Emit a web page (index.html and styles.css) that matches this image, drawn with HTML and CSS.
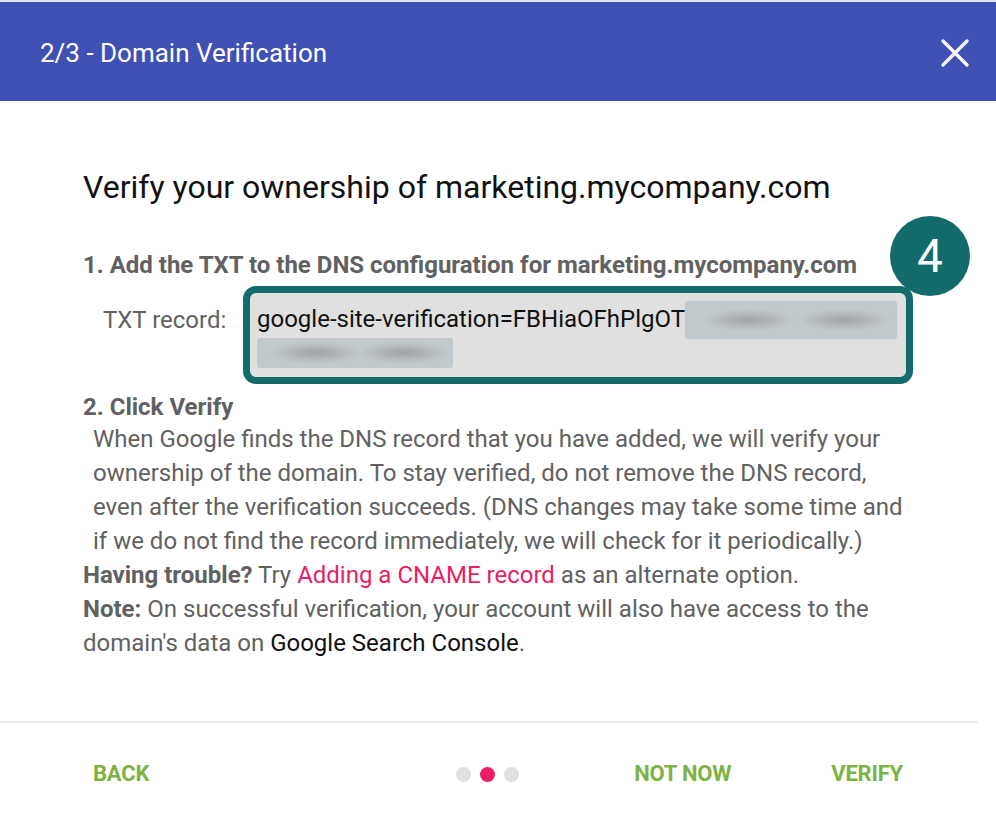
FILE: index.html
```html
<!DOCTYPE html>
<html>
<head>
<meta charset="utf-8">
<link rel="stylesheet" href="styles.css">
</head>
<body>
<div class="dialog">
  <header class="bar">
    <span class="bar-title">2/3 - Domain Verification</span>
    <svg class="close" width="28" height="28" viewBox="0 0 28 28"><path d="M2 2 L26 26 M26 2 L2 26" stroke="#fff" stroke-width="3.2" stroke-linecap="round"/></svg>
  </header>
  <main class="content">
    <h1 class="heading">Verify your ownership of marketing.mycompany.com</h1>
    <div class="step1">
      <div class="step-title">1. Add the TXT to the DNS configuration for marketing.mycompany.com</div>
      <div class="badge">4</div>
    </div>
    <div class="txt-row">
      <div class="txt-label">TXT record:</div>
      <div class="txt-box">
        <div class="txt-line">google-site-verification=FBHiaOFhPlgOT<span class="blur blur1"></span></div>
        <div class="txt-line"><span class="blur blur2"></span></div>
      </div>
    </div>
    <div class="step-title step2">2. Click Verify</div>
    <p class="para">When Google finds the DNS record that you have added, we will verify your ownership of the domain. To stay verified, do not remove the DNS record, even after the verification succeeds. (DNS changes may take some time and if we do not find the record immediately, we will check for it periodically.)</p>
    <div class="note">
      <div class="note-line"><b>Having trouble?</b> Try <span class="link">Adding a CNAME record</span> as an alternate option.</div>
      <div class="note-line"><b>Note:</b> On successful verification, your account will also have access to the</div>
      <div class="note-line">domain's data on <span class="dark">Google Search Console</span>.</div>
    </div>
  </main>
  <footer class="foot">
    <span class="btn btn-back">BACK</span>
    <span class="dots"><i class="dot"></i><i class="dot on"></i><i class="dot"></i></span>
    <span class="btn btn-notnow">NOT NOW</span>
    <span class="btn btn-verify">VERIFY</span>
  </footer>
</div>
</body>
</html>
```
FILE: styles.css
```css
* { box-sizing: border-box; }
html, body { margin: 0; padding: 0; background: #fff; }
body { font-family: Roboto, "Liberation Sans", Arial, sans-serif; color: #616161; }
.dialog { width: 996px; height: 814px; border-top: 2px solid #e6e6ef; }
.bar {
  height: 99px; background: #3f51b5; display: flex; align-items: center;
  justify-content: space-between; padding: 0 27px 0 40px;
}
.bar-title { color: #fff; font-size: 26px; line-height: 30px; margin-top: 2px; }
.close { display: block; margin-top: 2px; }
.content { padding: 69px 0 0 83px; position: relative; }
.heading { margin: 0; font-size: 32px; line-height: 35px; font-weight: 400; color: #111; }
.step1 { position: relative; margin-top: 43px; }
.step-title { font-weight: 700; font-size: 24px; line-height: 34px; color: #616161; }
.badge {
  position: absolute; left: 807px; top: -32px; width: 80px; height: 80px; border-radius: 50%;
  background: #136b6a; color: #fff; font-size: 46px; line-height: 80px; text-align: center;
}
.txt-row { display: flex; align-items: flex-start; margin-top: 4px; }
.txt-label { width: 160px; padding: 19px 0 0 20px; font-size: 24px; line-height: 30px; color: #616161; }
.txt-box {
  width: 670px; height: 98px; border: 7px solid #136b6a; border-radius: 13px; background: #e0e0e0;
  padding: 11px 0 0 7px; color: #111; font-size: 24px;
}
.txt-line { height: 31px; line-height: 31px; white-space: nowrap; display: flex; align-items: center; }
.blur {
  display: inline-block; border-radius: 3px;
  background:
    radial-gradient(ellipse 45px 11px at 30% 50%, rgba(150,150,150,0.75), rgba(150,150,150,0) 100%),
    radial-gradient(ellipse 45px 11px at 75% 50%, rgba(150,150,150,0.75), rgba(150,150,150,0) 100%),
    #c2c9cc;
}
.blur1 { width: 212px; height: 38px; margin-left: 0; }
.blur2 { width: 196px; height: 30px; margin-top: 4px; }
.step2 { margin-top: 6px; }
.para { margin: -2px 0 0 10px; width: 820px; font-size: 24px; line-height: 34px; }
.note { font-size: 24px; line-height: 34px; }
.note-line { white-space: nowrap; }
.note b { color: #616161; }
.link { color: #e91e63; }
.dark { color: #111; }
.foot {
  margin-top: 61px; width: 978px; border-top: 2px solid #eeeeee;
  display: flex; align-items: center; padding: 38px 0 0 93px;
}
.btn { font-weight: 700; font-size: 22px; line-height: 26px; color: #7cb342; letter-spacing: -0.2px; }
.dots { display: flex; gap: 9px; margin-left: 307px; }
.dot { display: block; width: 15px; height: 15px; border-radius: 50%; background: #e0e0e0; }
.dot.on { background: #e91e63; }
.btn-notnow { margin-left: 115px; }
.btn-verify { margin-left: 100px; }
```
